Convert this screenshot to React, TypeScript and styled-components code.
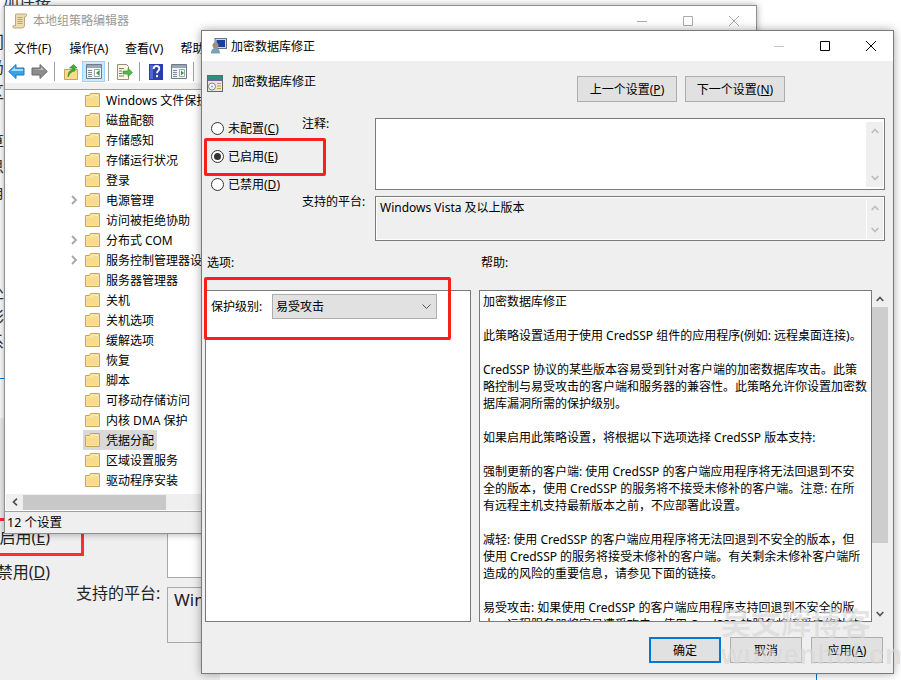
import React from 'react';
import styled, { createGlobalStyle } from 'styled-components';

const GlobalStyle = createGlobalStyle`
  html, body {
    margin: 0;
    padding: 0;
    background: #fff;
    overflow: hidden;
  }
  #root {
    width: 901px;
    height: 680px;
  }
  * {
    box-sizing: border-box;
  }
`;

const FONT = `"Noto Sans", "Noto Sans CJK SC", sans-serif`;

const Desktop = styled.div`
  position: relative;
  width: 901px;
  height: 680px;
  overflow: hidden;
  background: #fff;
  color: #000;
  font: 12px/17px ${FONT};
`;

const Key = styled.span`
  text-decoration: underline;
`;

/* ---------- windows behind ---------- */

const BackStrip = styled.div`
  position: absolute;
  left: -12px;
  top: -12px;
  width: 60px;
  font-size: 16px;
  line-height: 25px;
  color: #333;
`;

const BackTopText = styled.div`
  height: 42px;
  white-space: nowrap;
  padding-left: 15px;
`;

const BackLine = styled.div`
  height: 25px;
  white-space: nowrap;
`;

const BackDialog = styled.div`
  position: absolute;
  left: -120px;
  top: 378px;
  width: 340px;
  height: 302px;
  background: #efefef;
  border-top: 1px solid #0078d7;
  font-size: 16px;
  line-height: 22px;
  color: #222;
`;

const BackTitle = styled.div`
  height: 39px;
  background: #fff;
`;

const BackGrid = styled.div`
  display: grid;
  grid-template-columns: 196px 91px 1fr;
  grid-template-rows: 148px 56px;
  row-gap: 9px;
  padding-top: 12px;
`;

const BackRadios = styled.div`
  grid-row: 1 / 3;
  padding: 90px 26px 0 0;
  text-align: right;
  line-height: 35px;
`;

const BackLabel = styled.div`
  grid-column: 2;
  grid-row: 2;
  margin-top: -5px;
`;

const BackBox = styled.div<{ $grey?: boolean }>`
  grid-column: 3;
  border: 1px solid #a8a8a8;
  background: ${(p) => (p.$grey ? '#efefef' : '#fff')};
  padding: 1px 6px;
  font-size: 17px;
`;

const BackMark = styled.div`
  position: absolute;
  left: 100px;
  top: 139px;
  width: 104px;
  height: 38px;
  border: 3px solid #f53232;
`;

const BlueLine = styled.div`
  position: absolute;
  left: 816px;
  top: 674px;
  width: 1px;
  height: 6px;
  background: #0078d7;
`;

/* ---------- policy editor window ---------- */

const EditorWindow = styled.div`
  position: absolute;
  left: 4px;
  top: 5px;
  width: 753px;
  height: 529px;
  display: flex;
  flex-direction: column;
  background: #fff;
  border: 1px solid #8f8f8f;
  box-shadow: 0 0 7px rgba(0, 0, 0, 0.35);
`;

const EditorTitle = styled.div`
  height: 27px;
  flex: none;
  display: flex;
  align-items: center;
  padding: 2px 0 0 7px;
  color: #999;
  gap: 5px;
`;

const EditorCaption = styled.div`
  margin-left: auto;
  display: flex;
  align-items: center;
  gap: 36px;
  padding-right: 17px;
`;

const MenuBar = styled.div`
  height: 27px;
  flex: none;
  display: flex;
  align-items: center;
  padding: 3px 0 0 9px;
`;

const MenuItem = styled.div`
  width: 55.5px;
  white-space: nowrap;
`;

const Toolbar = styled.div`
  height: 23px;
  flex: none;
  display: flex;
  align-items: center;
`;

const ToolButton = styled.div<{ $active?: boolean }>`
  width: 23px;
  height: 21px;
  display: flex;
  align-items: center;
  justify-content: center;
  border: 1px solid ${(p) => (p.$active ? '#99d1ff' : 'transparent')};
  background: ${(p) => (p.$active ? '#cce8ff' : 'transparent')};
`;

const ToolSep = styled.div`
  width: 1px;
  height: 19px;
  margin: 0 4px 0 3px;
  background: #a0a0a0;
`;

const ToolStrip = styled.div`
  height: 6px;
  flex: none;
  background: #f0f0f0;
  border-bottom: 0;
`;

const Tree = styled.div`
  height: 405px;
  flex: none;
  border-top: 1px solid #a0a0a0;
  overflow: hidden;
`;

const TreeRow = styled.div`
  height: 20px;
  display: flex;
  align-items: center;
  padding-left: 65px;
  white-space: nowrap;
`;

const Expander = styled.div`
  width: 13px;
  flex: none;
  display: flex;
  padding-left: 1px;
`;

const TreeItem = styled.div<{ $selected?: boolean }>`
  display: flex;
  align-items: center;
  gap: 6px;
  height: 20px;
  padding: 0 3px 0 2px;
  background: ${(p) => (p.$selected ? '#d9d9d9' : 'transparent')};
`;

const HScroll = styled.div`
  height: 16px;
  flex: none;
  display: flex;
  align-items: center;
  background: #efefef;
  margin-left: 1px;
`;

const HArrow = styled.div`
  width: 17px;
  display: flex;
  justify-content: center;
`;

const HThumb = styled.div`
  width: 143px;
  height: 15px;
  background: #c8c8c8;
`;

const StatusBar = styled.div`
  flex: 1;
  margin-top: 1px;
  border-top: 1px solid #a0a0a0;
  background: #efefef;
  display: flex;
  align-items: center;
  padding-left: 2px;
  font-size: 12.5px;
`;

/* ---------- settings dialog ---------- */

const Dialog = styled.div`
  position: absolute;
  left: 201px;
  top: 30px;
  width: 693px;
  height: 644px;
  display: flex;
  flex-direction: column;
  background: #efefef;
  border: 1px solid #7a7a7a;
  box-shadow: 0 0 9px rgba(0, 0, 0, 0.35);
`;

const DialogTitle = styled.div`
  height: 30px;
  flex: none;
  display: flex;
  align-items: center;
  padding-left: 9px;
  gap: 4px;
  background: #fff;
`;

const DialogCaption = styled.div`
  margin-left: auto;
  display: flex;
  align-items: center;
  gap: 36px;
  padding-right: 17px;
`;

const HeaderRow = styled.div`
  height: 27px;
  margin-top: 14px;
  flex: none;
  display: flex;
  align-items: flex-start;
  padding: 0 108px 0 5px;
  gap: 9px;
`;

const HeaderName = styled.div`
  margin-top: -2px;
`;

const NavButtons = styled.div`
  margin-left: auto;
  margin-top: 1px;
  display: flex;
  gap: 8px;
`;

const PushButton = styled.div<{ $width: number; $default?: boolean }>`
  width: ${(p) => p.$width}px;
  height: 26px;
  display: flex;
  align-items: center;
  justify-content: center;
  background: #e1e1e1;
  border: ${(p) => (p.$default ? '2px solid #0078d7' : '1px solid #adadad')};
  white-space: nowrap;
`;

const SettingsGrid = styled.div`
  margin-top: 16px;
  flex: none;
  display: grid;
  grid-template-columns: 91px 73px 510px;
  grid-template-rows: 72px 45px;
  row-gap: 6px;
  padding-left: 9px;
`;

const RadioGroup = styled.div`
  grid-row: 1 / 3;
  margin-top: -4px;
`;

const RadioRow = styled.div`
  height: 28px;
  display: flex;
  align-items: center;
  gap: 4px;
`;

const RadioDot = styled.div<{ $checked?: boolean }>`
  width: 13px;
  height: 13px;
  border-radius: 50%;
  border: 1px solid #333;
  background: #fff;
  display: flex;
  align-items: center;
  justify-content: center;
  &::after {
    content: '';
    width: 7px;
    height: 7px;
    border-radius: 50%;
    background: ${(p) => (p.$checked ? '#333' : 'transparent')};
  }
`;

const FieldLabel = styled.div<{ $row: number }>`
  grid-column: 2;
  grid-row: ${(p) => p.$row};
  margin-top: -3px;
`;

const FieldBox = styled.div<{ $row: number; $grey?: boolean }>`
  grid-column: 3;
  grid-row: ${(p) => p.$row};
  display: flex;
  justify-content: space-between;
  border: 1px solid #7a7a7a;
  background: ${(p) => (p.$grey ? '#efefef' : '#fff')};
  outline: ${(p) => (p.$grey ? '1px solid #fff' : 'none')};
  outline-offset: -2px;
  padding: 2px 1px 1px 4px;
`;

const VScroll = styled.div<{ $grey?: boolean }>`
  width: 17px;
  flex: none;
  display: flex;
  flex-direction: column;
  align-items: center;
  justify-content: space-between;
  padding: 6px 0;
  margin: ${(p) => (p.$grey ? '0' : '1px 0')};
  background: #efefef;
  border-left: ${(p) => (p.$grey ? '1px solid #fff' : 'none')};
`;

const SectionLabels = styled.div`
  flex: none;
  margin-top: 13px;
  display: grid;
  grid-template-columns: 274px 1fr;
  padding-left: 5px;
  height: 17px;
`;

const Panels = styled.div`
  margin-top: 19px;
  flex: none;
  display: grid;
  grid-template-columns: 266px 393px 16px;
  column-gap: 8px;
  padding-left: 3px;
  height: 332px;
`;

const OptionsPanel = styled.div`
  background: #fff;
  border: 1px solid #7a7a7a;
  padding: 3px 5px;
`;

const OptionRow = styled.div`
  display: flex;
  align-items: center;
  gap: 5px;
`;

const OptionName = styled.div`
  width: 56px;
  flex: none;
  white-space: nowrap;
`;

const SelectBox = styled.div`
  width: 165px;
  height: 25px;
  display: flex;
  align-items: center;
  justify-content: space-between;
  padding: 0 5px 0 3px;
  background: #e1e1e1;
  border: 1px solid #adadad;
`;

const HelpPanel = styled.div`
  background: #fff;
  border: 1px solid #7a7a7a;
  padding: 2px 3px;
  overflow: hidden;
`;

const HelpLine = styled.div`
  height: 17px;
  white-space: nowrap;
`;

const HelpScroll = styled.div`
  margin-left: -8px;
  width: 16px;
  display: flex;
  flex-direction: column;
  align-items: center;
  background: #efefef;
`;

const HelpArrow = styled.div<{ $bottom?: boolean }>`
  height: 17px;
  flex: none;
  display: flex;
  align-items: center;
  margin-top: ${(p) => (p.$bottom ? 'auto' : '0')};
`;

const HelpThumb = styled.div`
  width: 100%;
  height: 236px;
  background: #cdcdcd;
`;

const Footer = styled.div`
  flex: none;
  margin-top: 15px;
  display: flex;
  justify-content: flex-end;
  gap: 9px;
  padding-right: 10px;
`;

/* ---------- overlays ---------- */

const RedMark = styled.div<{ $x: number; $y: number; $w: number; $h: number }>`
  position: absolute;
  left: ${(p) => p.$x}px;
  top: ${(p) => p.$y}px;
  width: ${(p) => p.$w}px;
  height: ${(p) => p.$h}px;
  border: 3px solid #f8201c;
  border-radius: 2px;
`;

const Watermark = styled.div`
  position: absolute;
  left: 721px;
  top: 606px;
  width: 170px;
  color: rgba(150, 150, 150, 0.25);
  text-shadow: 0 0 1px rgba(255, 255, 255, 0.6);
  font-weight: 700;
  white-space: nowrap;
  pointer-events: none;
`;

const MarkName = styled.div`
  font-size: 30px;
  line-height: 34px;
`;

const MarkSite = styled.div`
  font-size: 28px;
  line-height: 30px;
  letter-spacing: 0.5px;
  font-family: "Liberation Sans", sans-serif;
`;

/* ---------- drawings ---------- */

const Folder = () => (
  <svg width="15" height="14" viewBox="0 0 15 14">
    <path d="M.5 2.5h4l1-2h9v13H.5z" fill="#fbe7a0" stroke="#c8a55f" />
    <path d="M1.5 4.5h12v8h-12z" fill="#f8dc8b" />
    <path d="M9.5 2h4v1.5h-4z" fill="#fff" stroke="#d9c48b" strokeWidth=".5" />
  </svg>
);

const ExpandChevron = () => (
  <svg width="7" height="10" viewBox="0 0 7 10">
    <path d="M1 1l4 4-4 4" fill="none" stroke="#a6a6a6" strokeWidth="1.8" />
  </svg>
);

const ArrowLeft = () => (
  <svg width="17" height="15" viewBox="0 0 17 15">
    <path d="M8 .5v3.5h8v7H8v3.5L.7 7.5z" fill="#35a4ee" stroke="#1c79c4" strokeLinejoin="round" />
    <path d="M7 3v2h8v2H3z" fill="#a8dcfa" />
  </svg>
);

const ArrowRight = () => (
  <svg width="17" height="15" viewBox="0 0 17 15">
    <path d="M9 .5v3.5H1v7h8v3.5l7.3-7z" fill="#8c8c8c" stroke="#6b6b6b" strokeLinejoin="round" />
    <path d="M2 5h8V3l3 3z" fill="#c8c8c8" />
  </svg>
);

const UpFolder = () => (
  <svg width="16" height="16" viewBox="0 0 16 16">
    <path d="M1.5 5.5h13v10h-13z" fill="#f8dc8b" stroke="#c8a55f" />
    <path d="M5 13c0-4 1-6 4-7V4L6.500 4 10.500.5 14 4h-2v3c-3 0-5 2-7 6z" fill="#3fae3a" stroke="#2c8a2a" strokeWidth=".6" />
  </svg>
);

const PaneIcon = ({ right }: { right?: boolean }) => (
  <svg width="16" height="15" viewBox="0 0 16 15">
    <path d="M.5.5h15v14H.500z" fill="#f4f4f4" stroke="#6c7a86" />
    <path d="M1 1h14v3H1z" fill="#9aa8b4" />
    <path d="M2 6h4v1H2zm0 2h4v1H2zm0 2h4v1H2zm0 2h4v1H2z" fill="#7a8794" />
    <path d="M8.500 5.500h5v7h-5z" fill="#fff" stroke="#9aa8b4" />
    <path d={right ? 'M10 6.500l3 2.500-3 2.500z' : 'M13 6.500L10 9l3 2.500z'} fill="#2f9e44" />
  </svg>
);

const ExportIcon = () => (
  <svg width="17" height="16" viewBox="0 0 17 16">
    <path d="M1.500.5h9l2 2v13h-11z" fill="#fdf8e8" stroke="#9b8f70" />
    <path d="M3 4h5v1H3zm0 2.500h3v1H3zm0 2.500h3v1H3zm0 2.500h5v1H3z" fill="#777" />
    <path d="M7 7h5V4.500L16.500 8.500 12 12.500V10H7z" fill="#55b949" stroke="#318a2c" strokeWidth=".6" />
  </svg>
);

const HelpIcon = () => (
  <svg width="14" height="16" viewBox="0 0 14 16">
    <rect width="14" height="16" fill="#2c3fa8" />
    <rect x="1" y="1" width="3" height="14" fill="#4f66d6" />
    <path d="M4.500 5c.3-2 1.500-3 3-3s2.800 1 2.800 2.700c0 2-2.300 2.300-2.300 4.500M8 11v2.200" fill="none" stroke="#fff" strokeWidth="1.800" />
  </svg>
);

const ScrollIcon = () => (
  <svg width="16" height="16" viewBox="0 0 16 16">
    <path d="M4 1h10c1 0 1 2 0 2.500L12.500 4v8c0 2-1 3-2.500 3H2c-1.500 0-1.500-2.500 0-2.500h1.500V3C3.500 2 3.500 1 4 1z" fill="#efdcae" stroke="#a99466" strokeWidth=".8" />
    <path d="M5.500 4.500h5M5.500 6.500h5M5.500 8.500h5M5.500 10.500h5" stroke="#a99466" strokeWidth=".8" />
  </svg>
);

const PolicyUserIcon = () => (
  <svg width="16" height="16" viewBox="0 0 16 16">
    <rect x="4" y="0.500" width="11.500" height="10" fill="#cfd6de" stroke="#68727d" />
    <rect x="5.500" y="2" width="8.500" height="7" fill="#1b3fa0" />
    <circle cx="4.500" cy="7.500" r="3" fill="#9c8f7e" />
    <path d="M0 15.500c0-4 2-5.500 4.500-5.500S9 11.500 9 15.500z" fill="#7fa1b6" />
  </svg>
);

const PolicyFileIcon = () => (
  <svg width="16" height="17" viewBox="0 0 16 17">
    <rect x=".5" y=".5" width="15" height="16" fill="#e6e6da" stroke="#5c6b66" />
    <rect x="1" y="1" width="14" height="3" fill="#2f8f7c" />
    <rect x="1" y="4" width="14" height="2" fill="#7c5d9c" />
    <circle cx="5" cy="11.500" r="3.500" fill="#f2f2f2" stroke="#7a8a8a" />
    <circle cx="5" cy="11.500" r="1" fill="#9ab" />
    <path d="M10 8h4v1h-4zm0 2.500h4v1h-4zm0 2.500h4v1h-4z" fill="#c9a23e" />
  </svg>
);

const MinGlyph = ({ color }: { color: string }) => (
  <svg width="10" height="10" viewBox="0 0 10 10">
    <path d="M0 5.500h10" stroke={color} />
  </svg>
);

const MaxGlyph = ({ color }: { color: string }) => (
  <svg width="10" height="10" viewBox="0 0 10 10">
    <path d="M.5.500h9v9h-9z" fill="none" stroke={color} />
  </svg>
);

const CloseGlyph = ({ color }: { color: string }) => (
  <svg width="10" height="10" viewBox="0 0 10 10">
    <path d="M0 0l10 10M10 0L0 10" stroke={color} />
  </svg>
);

const ScrollChevron = ({ up, color = '#bdbdbd' }: { up?: boolean; color?: string }) => (
  <svg width="8" height="6" viewBox="0 0 8 6">
    <path d={up ? 'M.7 5L4 1.500 7.300 5' : 'M.7 1L4 4.500 7.300 1'} fill="none" stroke={color} strokeWidth="1.700" />
  </svg>
);

const LeftChevron = () => (
  <svg width="6" height="8" viewBox="0 0 6 8">
    <path d="M5 .7L1.500 4 5 7.300" fill="none" stroke="#505050" strokeWidth="1.700" />
  </svg>
);

const SelectChevron = () => (
  <svg width="9" height="5" viewBox="0 0 9 5">
    <path d="M.5.500l4 4 4-4" fill="none" stroke="#555" />
  </svg>
);

/* ---------- data ---------- */

const backLines = ['门', '仍', '区', '', '算', '思', '角', '', '', '(', '处', '彩', '系', '', '紧', '', '口', '', '', '章'];

const treeItems: { name: string; expandable?: boolean; selected?: boolean }[] = [
  { name: 'Windows 文件保护' },
  { name: '磁盘配额' },
  { name: '存储感知' },
  { name: '存储运行状况' },
  { name: '登录' },
  { name: '电源管理', expandable: true },
  { name: '访问被拒绝协助' },
  { name: '分布式 COM', expandable: true },
  { name: '服务控制管理器设置', expandable: true },
  { name: '服务器管理器' },
  { name: '关机' },
  { name: '关机选项' },
  { name: '缓解选项' },
  { name: '恢复' },
  { name: '脚本' },
  { name: '可移动存储访问' },
  { name: '内核 DMA 保护' },
  { name: '凭据分配', selected: true },
  { name: '区域设置服务' },
  { name: '驱动程序安装' },
];

const helpLines = [
  '加密数据库修正',
  '',
  '此策略设置适用于使用 CredSSP 组件的应用程序(例如: 远程桌面连接)。',
  '',
  'CredSSP 协议的某些版本容易受到针对客户端的加密数据库攻击。此策',
  '略控制与易受攻击的客户端和服务器的兼容性。此策略允许你设置加密数',
  '据库漏洞所需的保护级别。',
  '',
  '如果启用此策略设置，将根据以下选项选择 CredSSP 版本支持:',
  '',
  '强制更新的客户端: 使用 CredSSP 的客户端应用程序将无法回退到不安',
  '全的版本，使用 CredSSP 的服务将不接受未修补的客户端。注意: 在所',
  '有远程主机支持最新版本之前，不应部署此设置。',
  '',
  '减轻: 使用 CredSSP 的客户端应用程序将无法回退到不安全的版本，但',
  '使用 CredSSP 的服务将接受未修补的客户端。有关剩余未修补客户端所',
  '造成的风险的重要信息，请参见下面的链接。',
  '',
  '易受攻击: 如果使用 CredSSP 的客户端应用程序支持回退到不安全的版',
  '本，远程服务器将容易遭受攻击。使用 CredSSP 的服务将接受未修补的',
];

export default function App() {
  return (
    <Desktop>
      <GlobalStyle />

      <BackStrip>
        <BackTopText>加连接</BackTopText>
        {backLines.map((line, i) => (
          <BackLine key={i}>{line}</BackLine>
        ))}
      </BackStrip>

      <BackDialog>
        <BackTitle />
        <BackGrid>
          <BackRadios>
            <div>
              已启用(<Key>E</Key>)
            </div>
            <div>
              已禁用(<Key>D</Key>)
            </div>
          </BackRadios>
          <BackBox />
          <BackLabel>支持的平台:</BackLabel>
          <BackBox $grey>Windows</BackBox>
        </BackGrid>
        <BackMark />
      </BackDialog>

      <BlueLine />

      <EditorWindow>
        <EditorTitle>
          <ScrollIcon />
          本地组策略编辑器
          <EditorCaption>
            <MinGlyph color="#aaa" />
            <MaxGlyph color="#aaa" />
            <CloseGlyph color="#aaa" />
          </EditorCaption>
        </EditorTitle>
        <MenuBar>
          <MenuItem>文件(F)</MenuItem>
          <MenuItem>操作(A)</MenuItem>
          <MenuItem>查看(V)</MenuItem>
          <MenuItem>帮助(H)</MenuItem>
        </MenuBar>
        <Toolbar>
          <ToolButton>
            <ArrowLeft />
          </ToolButton>
          <ToolButton>
            <ArrowRight />
          </ToolButton>
          <ToolSep />
          <ToolButton>
            <UpFolder />
          </ToolButton>
          <ToolButton $active>
            <PaneIcon />
          </ToolButton>
          <ToolSep />
          <ToolButton>
            <ExportIcon />
          </ToolButton>
          <ToolSep />
          <ToolButton>
            <HelpIcon />
          </ToolButton>
          <ToolButton>
            <PaneIcon right />
          </ToolButton>
          <ToolSep />
        </Toolbar>
        <ToolStrip />
        <Tree>
          {treeItems.map((item) => (
            <TreeRow key={item.name}>
              <Expander>{item.expandable && <ExpandChevron />}</Expander>
              <TreeItem $selected={item.selected}>
                <Folder />
                {item.name}
              </TreeItem>
            </TreeRow>
          ))}
        </Tree>
        <HScroll>
          <HArrow>
            <LeftChevron />
          </HArrow>
          <HThumb />
        </HScroll>
        <StatusBar>12 个设置</StatusBar>
      </EditorWindow>

      <Dialog>
        <DialogTitle>
          <PolicyUserIcon />
          加密数据库修正
          <DialogCaption>
            <MinGlyph color="#c4c4c4" />
            <MaxGlyph color="#000" />
            <CloseGlyph color="#000" />
          </DialogCaption>
        </DialogTitle>

        <HeaderRow>
          <PolicyFileIcon />
          <HeaderName>加密数据库修正</HeaderName>
          <NavButtons>
            <PushButton $width={100}>
              上一个设置(<Key>P</Key>)
            </PushButton>
            <PushButton $width={100}>
              下一个设置(<Key>N</Key>)
            </PushButton>
          </NavButtons>
        </HeaderRow>

        <SettingsGrid>
          <RadioGroup>
            <RadioRow>
              <RadioDot />
              <span>
                未配置(<Key>C</Key>)
              </span>
            </RadioRow>
            <RadioRow>
              <RadioDot $checked />
              <span>
                已启用(<Key>E</Key>)
              </span>
            </RadioRow>
            <RadioRow>
              <RadioDot />
              <span>
                已禁用(<Key>D</Key>)
              </span>
            </RadioRow>
          </RadioGroup>
          <FieldLabel $row={1}>注释:</FieldLabel>
          <FieldBox $row={1}>
            <span />
            <VScroll>
              <ScrollChevron up />
              <ScrollChevron />
            </VScroll>
          </FieldBox>
          <FieldLabel $row={2}>支持的平台:</FieldLabel>
          <FieldBox $row={2} $grey>
            <span>Windows Vista 及以上版本</span>
            <VScroll $grey>
              <ScrollChevron up />
              <ScrollChevron />
            </VScroll>
          </FieldBox>
        </SettingsGrid>

        <SectionLabels>
          <div>选项:</div>
          <div>帮助:</div>
        </SectionLabels>

        <Panels>
          <OptionsPanel>
            <OptionRow>
              <OptionName>保护级别:</OptionName>
              <SelectBox>
                易受攻击
                <SelectChevron />
              </SelectBox>
            </OptionRow>
          </OptionsPanel>
          <HelpPanel>
            {helpLines.map((line, i) => (
              <HelpLine key={i}>{line}</HelpLine>
            ))}
          </HelpPanel>
          <HelpScroll>
            <HelpArrow>
              <ScrollChevron up color="#555" />
            </HelpArrow>
            <HelpThumb />
            <HelpArrow $bottom>
              <ScrollChevron color="#555" />
            </HelpArrow>
          </HelpScroll>
        </Panels>

        <Footer>
          <PushButton $width={72} $default>
            确定
          </PushButton>
          <PushButton $width={72}>取消</PushButton>
          <PushButton $width={72}>
            应用(<Key>A</Key>)
          </PushButton>
        </Footer>
      </Dialog>

      <RedMark $x={204} $y={138} $w={122} $h={38} />
      <RedMark $x={204} $y={277} $w={247} $h={63} />

      <Watermark>
        <MarkName>吴文辉博客</MarkName>
        <MarkSite>wuwenhui.cn</MarkSite>
      </Watermark>
    </Desktop>
  );
}
